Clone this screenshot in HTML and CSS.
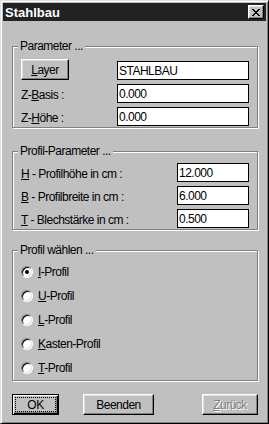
FILE: index.html
```html
<!DOCTYPE html>
<html lang="de">
<head>
  <meta charset="UTF-8" />
  <title>Stahlbau</title>
  <link rel="stylesheet" href="styles.css">
</head>
<body>
  <div class="window">
    <div class="titlebar">
      <span class="title">Stahlbau</span>
      <button type="button" class="close">
        <svg width="8" height="7" viewBox="0 0 8 7" shape-rendering="crispEdges">
          <path fill="#000" d="M0 0h2v1H0zM6 0h2v1H6zM1 1h2v1H1zM5 1h2v1H5zM2 2h4v1H2zM3 3h2v1H3zM2 4h4v1H2zM1 5h2v1H1zM5 5h2v1H5zM0 6h2v1H0zM6 6h2v1H6z"/>
        </svg>
      </button>
    </div>

    <div class="dialog">
      <fieldset class="group group-params">
        <legend>Parameter ...</legend>
        <div class="row row-first">
          <button type="button" class="btn btn-layer"><u>L</u>ayer</button>
          <input type="text" class="field field-wide" value="STAHLBAU">
        </div>
        <div class="row">
          <label>Z-<u>B</u>asis :</label>
          <input type="text" class="field field-wide" value="0.000">
        </div>
        <div class="row">
          <label>Z-<u>H</u>öhe :</label>
          <input type="text" class="field field-wide" value="0.000">
        </div>
      </fieldset>

      <fieldset class="group group-profile">
        <legend>Profil-Parameter ...</legend>
        <div class="row">
          <label><u>H</u> - Profilhöhe in cm :</label>
          <input type="text" class="field field-short" value="12.000">
        </div>
        <div class="row">
          <label><u>B</u> - Profilbreite in cm :</label>
          <input type="text" class="field field-short" value="6.000">
        </div>
        <div class="row">
          <label><u>T</u> - Blechstärke in cm :</label>
          <input type="text" class="field field-short" value="0.500">
        </div>
      </fieldset>

      <fieldset class="group group-choice">
        <legend>Profil wählen ...</legend>
        <div class="option"><span class="radio checked"></span><span><u>I</u>-Profil</span></div>
        <div class="option"><span class="radio"></span><span><u>U</u>-Profil</span></div>
        <div class="option"><span class="radio"></span><span><u>L</u>-Profil</span></div>
        <div class="option"><span class="radio"></span><span><u>K</u>asten-Profil</span></div>
        <div class="option"><span class="radio"></span><span><u>T</u>-Profil</span></div>
      </fieldset>

      <div class="actions">
        <button type="button" class="btn btn-default btn-ok"><span class="focus">OK</span></button>
        <button type="button" class="btn btn-quit">Beenden</button>
        <button type="button" class="btn btn-back" disabled><u>Z</u>urück</button>
      </div>
    </div>
  </div>
</body>
</html>
```

FILE: styles.css
```css
* {
  box-sizing: border-box;
}
html, body {
  margin: 0;
  padding: 0;
}
body {
  background: #c0c0c0;
  font-family: "Liberation Sans", Arial, sans-serif;
  font-size: 12px;
  letter-spacing: -0.5px;
  color: #000;
}
.window {
  width: 269px;
  height: 424px;
  padding: 2px;
  background: #c0c0c0;
  border: 1px solid;
  border-color: #dfdfdf #000 #000 #dfdfdf;
  box-shadow: inset 1px 1px #fff, inset -1px -1px #808080;
}
.titlebar {
  display: flex;
  align-items: center;
  height: 18px;
  padding: 0 2px 0 2px;
  background: #222;
}
.title {
  color: #fff;
  font-weight: bold;
  font-size: 13px;
  letter-spacing: 0;
}
.close {
  display: flex;
  align-items: center;
  justify-content: center;
  width: 16px;
  height: 14px;
  margin-left: auto;
  padding: 0;
  background: #c0c0c0;
  border: 1px solid;
  border-color: #fff #000 #000 #fff;
  box-shadow: inset -1px -1px #808080, inset 1px 1px #dfdfdf;
}
.dialog {
  padding: 18px 8px 0 9px;
}
.group {
  margin: 0;
  padding: 6px 8px 1px 8px;
  border: 1px solid #808080;
  box-shadow: 1px 1px 0 #fff, inset 1px 1px 0 #fff;
}
.group legend {
  margin-left: -3px;
  padding: 0 2px;
  height: 14px;
  line-height: 14px;
  background: #c0c0c0;
}
.group-profile {
  margin-top: 16px;
  padding-top: 5px;
}
.group-choice {
  margin-top: 13px;
  padding: 3px 8px 0 8px;
}
.row {
  display: flex;
  align-items: center;
  justify-content: space-between;
  height: 19px;
  margin-top: 4px;
}
legend + .row {
  margin-top: 0;
}
.row-first {
  height: 21px;
  align-items: flex-end;
}
.row label {
  padding-top: 2px;
}
.field {
  height: 19px;
  padding: 0 0 0 1px;
  border: 1px solid #000;
  background: #fff;
  font: inherit;
  letter-spacing: inherit;
  color: #000;
  outline: none;
}
.field-wide {
  width: 132px;
}
.field-short {
  width: 72px;
}
.btn {
  height: 21px;
  padding: 0;
  background: #c0c0c0;
  font: inherit;
  letter-spacing: inherit;
  color: #000;
  border: 1px solid;
  border-color: #fff #000 #000 #fff;
  box-shadow: inset -1px -1px #808080, inset 1px 1px #dfdfdf;
}
.btn-layer {
  width: 48px;
  align-self: flex-start;
}
.option {
  display: flex;
  align-items: center;
  gap: 5px;
  height: 24px;
}
.radio {
  position: relative;
  width: 12px;
  height: 12px;
  border-radius: 50%;
  background: #fff;
  border: 1px solid;
  border-color: #808080 #fff #fff #808080;
  box-shadow: inset 1px 1px #000, inset -1px -1px #dfdfdf;
}
.radio.checked::after {
  content: "";
  position: absolute;
  left: 3px;
  top: 3px;
  width: 4px;
  height: 4px;
  border-radius: 50%;
  background: #000;
}
.actions {
  display: flex;
  margin-top: 13px;
}
.btn-default {
  display: flex;
  width: 47px;
  padding: 2px;
  border: 1px solid #000;
  box-shadow: inset 1px 1px #fff, inset -1px -1px #000, inset -2px -2px #808080;
}
.focus {
  flex: 1;
  display: flex;
  align-items: center;
  justify-content: center;
  border: 1px dotted #000;
}
.btn-quit {
  width: 71px;
  margin-left: 24px;
}
.btn-back {
  width: 56px;
  margin-left: auto;
  color: #808080;
  text-shadow: 1px 1px #fff;
}
```
